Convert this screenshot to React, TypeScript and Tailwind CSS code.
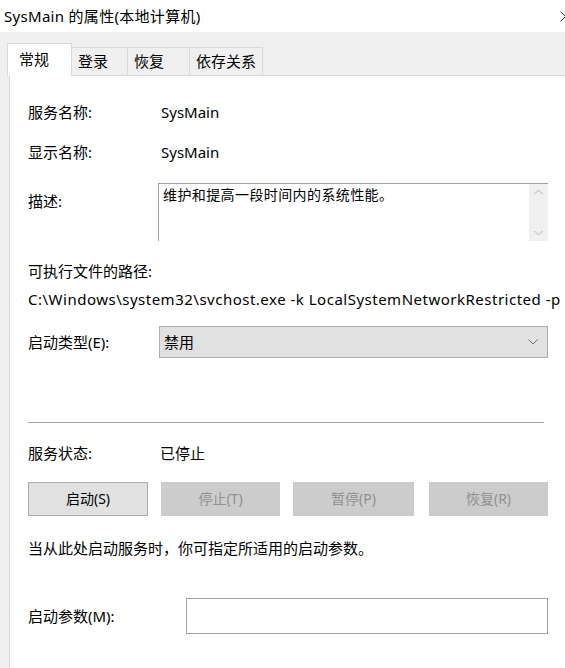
import React from "react";

const font = {
  fontFamily: '"Noto Sans", "Noto Sans CJK SC", sans-serif',
};

const tabs = ["常规", "登录", "恢复", "依存关系"];

const Btn: React.FC<{ label: string; disabled?: boolean; w: string }> = ({
  label,
  disabled,
  w,
}) => (
  <button
    disabled={disabled}
    className={
      disabled
        ? `${w} h-[34px] border border-[#cccccc] bg-[#cccccc] text-[#909090] text-[14px]`
        : `${w} h-[34px] border border-[#adadad] bg-[#e1e1e1] text-black text-[14px]`
    }
  >
    {label}
  </button>
);

export default function App() {
  return (
    <div
      className="w-[565px] h-[668px] bg-white overflow-hidden text-black text-[15px] leading-[24px]"
      style={font}
    >
      {/* title bar */}
      <div className="h-[32px] flex items-center pl-[4px] overflow-hidden">
        <span className="text-[15px] tracking-[0.3px]">SysMain 的属性(本地计算机)</span>
        <svg
          className="ml-auto mr-[-6px] shrink-0"
          width="11"
          height="11"
          viewBox="0 0 11 11"
        >
          <path d="M0.5 0.5 L10.5 10.5 M10.5 0.5 L0.5 10.5" stroke="#333" strokeWidth="1" />
        </svg>
      </div>

      {/* tab strip */}
      <div className="bg-[#f0f0f0] h-[636px] flex flex-col pl-[7px]">
        <div className="h-[43px] flex items-end pt-[11px]">
          {tabs.map((t, i) =>
            i === 0 ? (
              <div
                key={t}
                className="relative z-10 h-[33px] w-[65px] bg-white border border-[#d9d9d9] border-b-0 mb-[-1px] pl-[11px] pt-[3px]"
              >
                {t}
              </div>
            ) : (
              <div
                key={t}
                className={`h-[28px] bg-[#f0f0f0] border border-[#d9d9d9] border-l-0 border-b-0 pl-[6px] pt-[1px] ${
                  i === 1 ? "w-[56px]" : i === 2 ? "w-[62px]" : "w-[73px]"
                }`}
              >
                {t}
              </div>
            )
          )}
        </div>

        {/* panel */}
        <div className="flex-1 bg-white border-t border-l border-[#d9d9d9] ml-[2px] pl-[18px] pr-[17px]">
          <div className="flex h-[24px] mt-[24px]">
            <span className="w-[133px]">服务名称:</span>
            <span>SysMain</span>
          </div>
          <div className="flex h-[24px] mt-[16px]">
            <span className="w-[133px]">显示名称:</span>
            <span>SysMain</span>
          </div>

          <div className="flex mt-[19px]">
            <span className="w-[130px] mt-[6px]">描述:</span>
            <div className="flex-1 h-[58px] border border-[#a0a0a0] border-r-0 border-b-0 flex">
              <div className="flex-1 pl-[4px] leading-[22px] text-[14px] tracking-[0.4px]">
                维护和提高一段时间内的系统性能。
              </div>
              <div className="w-[19px] bg-[#f0f0f0] flex flex-col justify-between items-center py-[5px]">
                <svg width="9" height="6" viewBox="0 0 9 6">
                  <path d="M0.5 5 L4.5 1 L8.5 5" stroke="#b0b0b0" fill="none" />
                </svg>
                <svg width="9" height="6" viewBox="0 0 9 6">
                  <path d="M0.5 1 L4.5 5 L8.5 1" stroke="#b0b0b0" fill="none" />
                </svg>
              </div>
            </div>
          </div>

          <div className="h-[24px] mt-[18px]">可执行文件的路径:</div>
          <div className="h-[24px] mt-[4px] whitespace-nowrap tracking-[0.5px]">
            C:\Windows\system32\svchost.exe -k LocalSystemNetworkRestricted -p
          </div>

          <div className="flex items-center mt-[15px]">
            <span className="w-[131px]">启动类型(E):</span>
            <div className="flex-1 h-[32px] bg-[#e1e1e1] border border-[#adadad] flex items-center pl-[4px] pr-[9px]">
              <span>禁用</span>
              <svg className="ml-auto" width="10" height="6" viewBox="0 0 10 6">
                <path d="M0.5 0.5 L5 5 L9.5 0.5" stroke="#707070" fill="none" />
              </svg>
            </div>
          </div>

          <div className="h-px bg-[#a0a0a0] mt-[64px] mr-[4px]" />

          <div className="flex h-[24px] mt-[18px]">
            <span className="w-[132px]">服务状态:</span>
            <span>已停止</span>
          </div>

          <div className="flex mt-[17px] gap-[13px]">
            <Btn label="启动(S)" w="w-[120px]" />
            <Btn label="停止(T)" w="w-[119px]" disabled />
            <Btn label="暂停(P)" w="w-[121px]" disabled />
            <Btn label="恢复(R)" w="w-[119px] ml-[2px]" disabled />
          </div>

          <div className="h-[24px] mt-[20px]">
            当从此处启动服务时，你可指定所适用的启动参数。
          </div>

          <div className="flex items-center mt-[38px]">
            <span className="w-[158px]">启动参数(M):</span>
            <div className="flex-1 h-[36px] border border-[#a0a0a0] bg-white" />
          </div>
        </div>
      </div>
    </div>
  );
}
